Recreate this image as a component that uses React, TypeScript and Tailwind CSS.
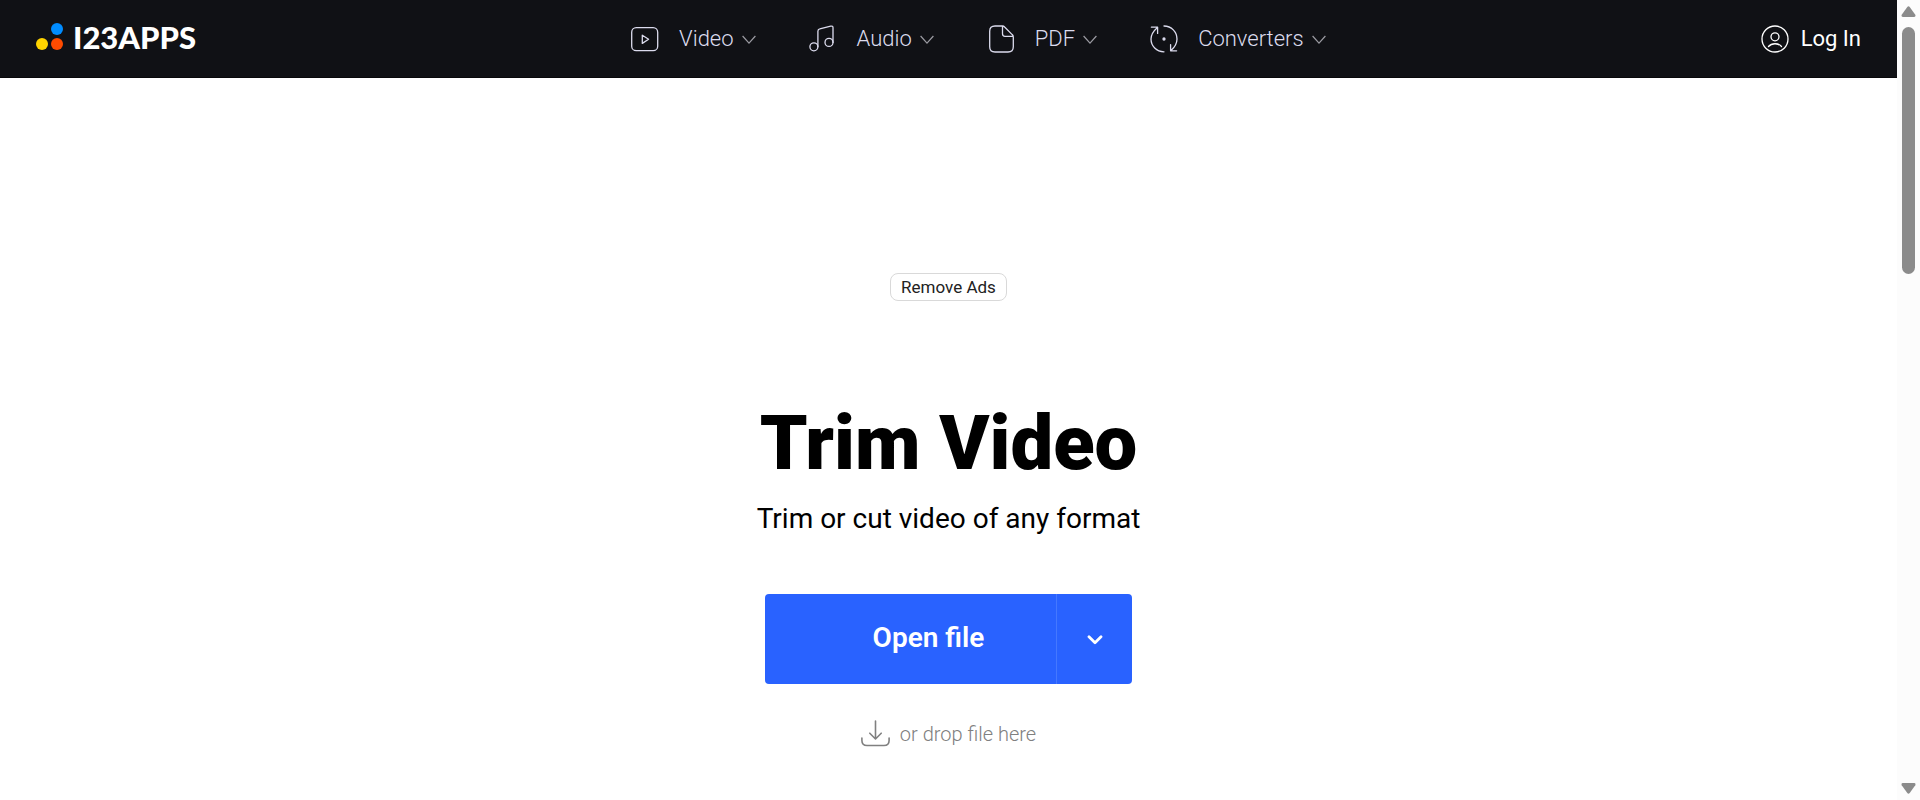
import type { ReactNode } from "react";

function Svg({ children, className }: { children: ReactNode; className?: string }) {
  return (
    <svg
      width="28"
      height="28"
      viewBox="0 0 28 28"
      fill="none"
      stroke="currentColor"
      strokeWidth="1.3"
      strokeLinecap="round"
      strokeLinejoin="round"
      aria-hidden="true"
      className={className}
    >
      {children}
    </svg>
  );
}

const menu = [
  {
    label: "Video",
    icon: (
      <Svg>
        <rect x="0.7" y="2.7" width="26" height="23" rx="4.5" />
        <path d="M11.3 10.2v8.2l6.3-4.1z" />
      </Svg>
    ),
  },
  {
    label: "Audio",
    icon: (
      <Svg>
        <circle cx="4.9" cy="21.8" r="4" />
        <circle cx="20" cy="17.4" r="4" />
        <path d="M8.9 21.8V6.2Q8.9 4.2 10.8 3.8L21.7 1.1Q24 .7 24 2.8V17.4" />
      </Svg>
    ),
  },
  {
    label: "PDF",
    icon: (
      <Svg>
        <path d="M15.5 1H8Q2.7 1 2.7 6.3V21.7Q2.7 27 8 27H21Q26.3 27 26.3 21.7V12.2Q26.3 10.6 25.2 9.6L17.6 2Q16.7 1 15.5 1V8.8Q15.5 11.3 18 11.3H26.1" />
      </Svg>
    ),
  },
  {
    label: "Converters",
    icon: (
      <Svg>
        <path d="M14 1C21.5 1 27 7 27 14C27 18.5 25 22 21 25.5M20.6 19.6V25.8H26.6M14 26.8C6.5 26.8 1 21 1 14C1 9.5 3 6.3 7.4 2.4M1.4 2.2H7.6V8.4" />
        <circle cx="14" cy="14" r="1" fill="currentColor" />
      </Svg>
    ),
  },
];

function Header() {
  return (
    <header className="flex h-[78px] items-center justify-between border-b border-[#08080a] bg-[#101115] px-9">
      <a href="#" aria-label="123APPS" className="flex items-center gap-2.5 pb-1 text-white">
        <svg width="27" height="28" viewBox="0 0 27 28" aria-hidden="true">
          <circle cx="21" cy="6" r="6" fill="#008cff" />
          <circle cx="6" cy="21" r="6" fill="#ffd400" />
          <circle cx="21" cy="21" r="6" fill="#ff4b00" />
        </svg>
        <span className="font-[Lato] text-[31px] leading-8 font-black">I23APPS</span>
      </a>
      <nav className="flex items-center gap-[53px]">
        {menu.map((item) => (
          <button key={item.label} type="button" className="flex items-center text-[#dcdcee]">
            {item.icon}
            <span className="ml-5 text-[22px] leading-7 font-light">{item.label}</span>
            <svg
              width="14"
              height="10"
              viewBox="0 0 14 10"
              fill="none"
              stroke="#9b9ba2"
              strokeWidth="1.2"
              aria-hidden="true"
              className="mt-0.5 ml-2"
            >
              <path d="M.6 1L7 8.2L13.4 1" />
            </svg>
          </button>
        ))}
      </nav>
      <a href="#" className="flex items-center gap-3 text-white">
        <Svg>
          <circle cx="14" cy="14" r="13" />
          <circle cx="14" cy="11.8" r="4" />
          <path d="M7.5 21.5C10.5 17.8 17.5 17.8 20.5 21.5" />
        </Svg>
        <span className="text-[22px] leading-7">Log In</span>
      </a>
    </header>
  );
}

function ScrollRail() {
  return (
    <div aria-hidden="true" className="flex w-[23px] shrink-0 flex-col items-center justify-between bg-[#fcfcfc] py-1.5">
      <div className="flex flex-col items-center gap-2.5">
        <svg width="15" height="11" viewBox="0 0 15 11" fill="#8b8b8b">
          <path d="M6.3 1Q7.5-.4 8.7 1L14.3 8.8Q15 11 13.2 11H1.8Q0 11 .7 8.8z" />
        </svg>
        <div className="h-[247px] w-[13px] rounded-full bg-[#8b8b8b]" />
      </div>
      <svg width="15" height="11" viewBox="0 0 15 11" fill="#8b8b8b">
        <path d="M6.3 10Q7.5 11.4 8.7 10L14.3 2.2Q15 0 13.2 0H1.8Q0 0 .7 2.2z" />
      </svg>
    </div>
  );
}

export default function App() {
  return (
    <div className="flex min-h-screen bg-white font-[Roboto,sans-serif]">
      <div className="min-w-0 flex-1">
        <Header />
        <main className="flex flex-col items-center pt-[195px]">
          <button type="button" className="h-7 rounded-lg border border-[#d9d9d9] px-2.5 text-[17px] leading-6 text-[#222]">
            Remove Ads
          </button>
          <h1 className="mt-[98px] text-[76px] leading-[88px] font-black text-black">Trim Video</h1>
          <p className="mt-3.5 text-[28px] leading-9 text-black">Trim or cut video of any format</p>
          <div className="mt-[57px] flex h-[90px] w-[367px] overflow-hidden rounded bg-[#2962ff] text-white">
            <button type="button" className="flex-1 pb-0.5 pl-9 text-[28px] leading-9 font-semibold">
              Open file
            </button>
            <button
              type="button"
              aria-label="More sources"
              className="flex w-[76px] items-center justify-center border-l border-[#4578ff] pt-0.5"
            >
              <svg width="16" height="10" viewBox="0 0 16 10" fill="none" stroke="currentColor" strokeWidth="2.8" strokeLinecap="round" strokeLinejoin="round">
                <path d="M2 1.8L8 7.8L14 1.8" />
              </svg>
            </button>
          </div>
          <p className="mt-9 flex items-center gap-2.5 text-xl leading-7 font-light text-[#808080]">
            <svg width="29" height="28" viewBox="0 0 29 28" fill="none" stroke="currentColor" strokeWidth="1.6" strokeLinecap="round" strokeLinejoin="round" aria-hidden="true">
              <path d="M14.5 1V18.6M8.8 13.2L14.5 19L20.2 13.2M.9 18V20.5Q.9 25.5 6 25.5H23Q28.1 25.5 28.1 20.5V18" />
            </svg>
            or drop file here
          </p>
        </main>
      </div>
      <ScrollRail />
    </div>
  );
}
